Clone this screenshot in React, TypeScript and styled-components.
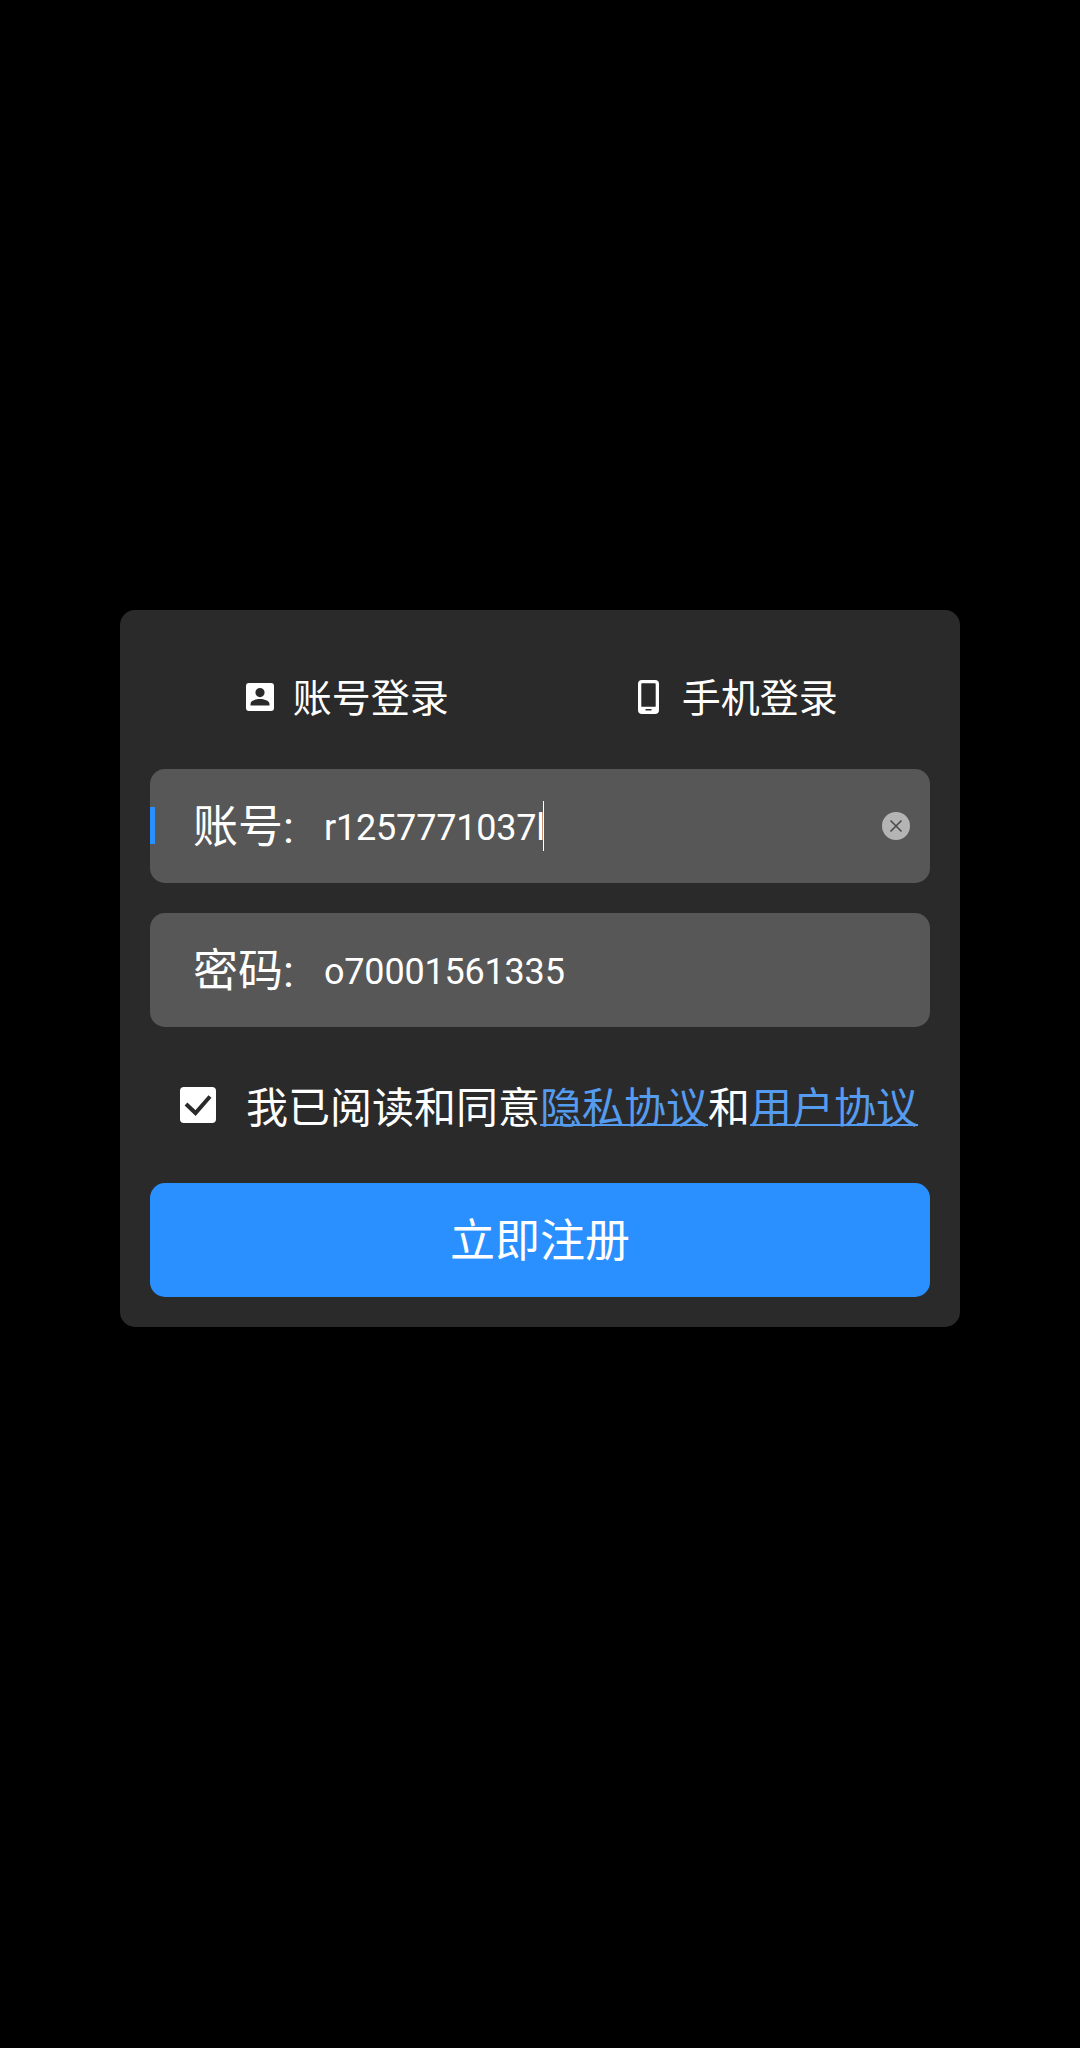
import React from "react";
import styled, { createGlobalStyle } from "styled-components";

const GlobalStyle = createGlobalStyle`
  html, body {
    margin: 0;
    padding: 0;
    background: #000;
  }
  body {
    font-family: Roboto, "Noto Sans CJK SC", sans-serif;
    color: #fff;
  }
`;

const Page = styled.div`
  width: 1080px;
  height: 2048px;
  box-sizing: border-box;
  padding-top: 610px;
  display: flex;
  justify-content: center;
  align-items: flex-start;
  background: #000;
`;

const Card = styled.div`
  width: 840px;
  height: 717px;
  box-sizing: border-box;
  padding: 30px;
  background: #2a2a2a;
  border-radius: 15px;
  display: flex;
  flex-direction: column;
`;

const TabRow = styled.div`
  height: 118px;
  margin-bottom: 11px;
  display: flex;
  flex-shrink: 0;
`;

const Tab = styled.div<{ $gap: number; $inset: number }>`
  flex: 1;
  box-sizing: border-box;
  padding-left: ${(props) => props.$inset}px;
  display: flex;
  align-items: center;
  justify-content: center;
  gap: ${(props) => props.$gap}px;
  font-size: 39px;
  line-height: 1;

  svg {
    margin-top: -5px;
  }
`;

const Field = styled.div`
  position: relative;
  height: 114px;
  flex-shrink: 0;
  margin-bottom: 30px;
  padding-left: 43px;
  padding-right: 20px;
  box-sizing: border-box;
  background: #575757;
  border-radius: 15px;
  display: flex;
  align-items: center;
`;

const FocusMark = styled.span`
  position: absolute;
  left: 0;
  top: 38px;
  width: 4.5px;
  height: 37px;
  background: #2a8fff;
`;

const Label = styled.span`
  width: 131px;
  flex-shrink: 0;
  padding-top: 2px;
  font-size: 45px;
  line-height: 1;
`;

const Value = styled.span`
  padding-top: 4px;
  font-size: 36px;
  line-height: 1;
  letter-spacing: -0.2px;
`;

const Caret = styled.span`
  display: inline-block;
  width: 1.5px;
  height: 50px;
  margin-left: -2px;
  background: #fff;
`;

const ClearButton = styled.span`
  position: absolute;
  right: 20px;
  top: 43px;
  width: 28px;
  height: 28px;
  display: flex;
`;

const AgreeRow = styled.div`
  height: 96px;
  margin-bottom: 30px;
  flex-shrink: 0;
  padding-left: 30px;
  display: flex;
  align-items: center;
  gap: 30px;
`;

const CheckBox = styled.span`
  width: 36px;
  height: 36px;
  flex-shrink: 0;
  display: flex;
  background: #fff;
  border-radius: 4px;
`;

const AgreeText = styled.div`
  padding-top: 7px;
  font-size: 42px;
  line-height: 1;
  white-space: nowrap;
`;

const PolicyLink = styled.a`
  color: #559bf0;
  text-decoration: underline;
  text-decoration-thickness: 2px;
  text-underline-offset: 1px;
`;

const SubmitButton = styled.div`
  height: 114px;
  flex-shrink: 0;
  padding-top: 2px;
  box-sizing: border-box;
  display: flex;
  align-items: center;
  justify-content: center;
  background: #2a8fff;
  border-radius: 15px;
  font-size: 45px;
  line-height: 1;
`;

const AccountIcon = () => (
  <svg width="28" height="28" viewBox="0 0 28 28">
    <path
      fill="#fff"
      fillRule="evenodd"
      d="M3 0h22a3 3 0 0 1 3 3v22a3 3 0 0 1-3 3H3a3 3 0 0 1-3-3V3a3 3 0 0 1 3-3zM14 5a4.6 4.6 0 1 0 0 9.2A4.6 4.6 0 0 0 14 5zM4.5 22.5h19v-1.6c0-3.4-5.8-4.9-9.5-4.9s-9.5 1.5-9.5 4.9z"
    />
  </svg>
);

const PhoneIcon = () => (
  <svg width="21" height="34" viewBox="0 0 21 34">
    <path
      fill="#fff"
      fillRule="evenodd"
      d="M4 0h13a4 4 0 0 1 4 4v26a4 4 0 0 1-4 4H4a4 4 0 0 1-4-4V4a4 4 0 0 1 4-4zM3.3 4v22.8h14.4V4a.8.8 0 0 0-.8-.8H4.100a.8.8 0 0 0-.8.8zM7.500 29v1.500h6V29z"
    />
  </svg>
);

const ClearIcon = () => (
  <svg width="28" height="28" viewBox="0 0 28 28">
    <circle cx="14" cy="14" r="14" fill="#b4b4b4" />
    <path d="M8.500 8.500l11 11M19.500 8.500l-11 11" stroke="#4a4a4a" strokeWidth="1.600" fill="none" />
  </svg>
);

const CheckIcon = () => (
  <svg width="36" height="36" viewBox="0 0 36 36">
    <path d="M6 17l9.500 9L30 9.500" stroke="#2a2a2a" strokeWidth="4" fill="none" />
  </svg>
);

const App: React.FC = () => {
  return (
    <Page>
      <GlobalStyle />
      <Card>
        <TabRow>
          <Tab $gap={19} $inset={5}>
            <AccountIcon />
            账号登录
          </Tab>
          <Tab $gap={23} $inset={6}>
            <PhoneIcon />
            手机登录
          </Tab>
        </TabRow>
        <Field>
          <FocusMark />
          <Label>账号:</Label>
          <Value>r1257771037l</Value>
          <Caret />
          <ClearButton>
            <ClearIcon />
          </ClearButton>
        </Field>
        <Field>
          <Label>密码:</Label>
          <Value>o70001561335</Value>
        </Field>
        <AgreeRow>
          <CheckBox>
            <CheckIcon />
          </CheckBox>
          <AgreeText>
            我已阅读和同意<PolicyLink>隐私协议</PolicyLink>和
            <PolicyLink>用户协议</PolicyLink>
          </AgreeText>
        </AgreeRow>
        <SubmitButton>立即注册</SubmitButton>
      </Card>
    </Page>
  );
};

export default App;
